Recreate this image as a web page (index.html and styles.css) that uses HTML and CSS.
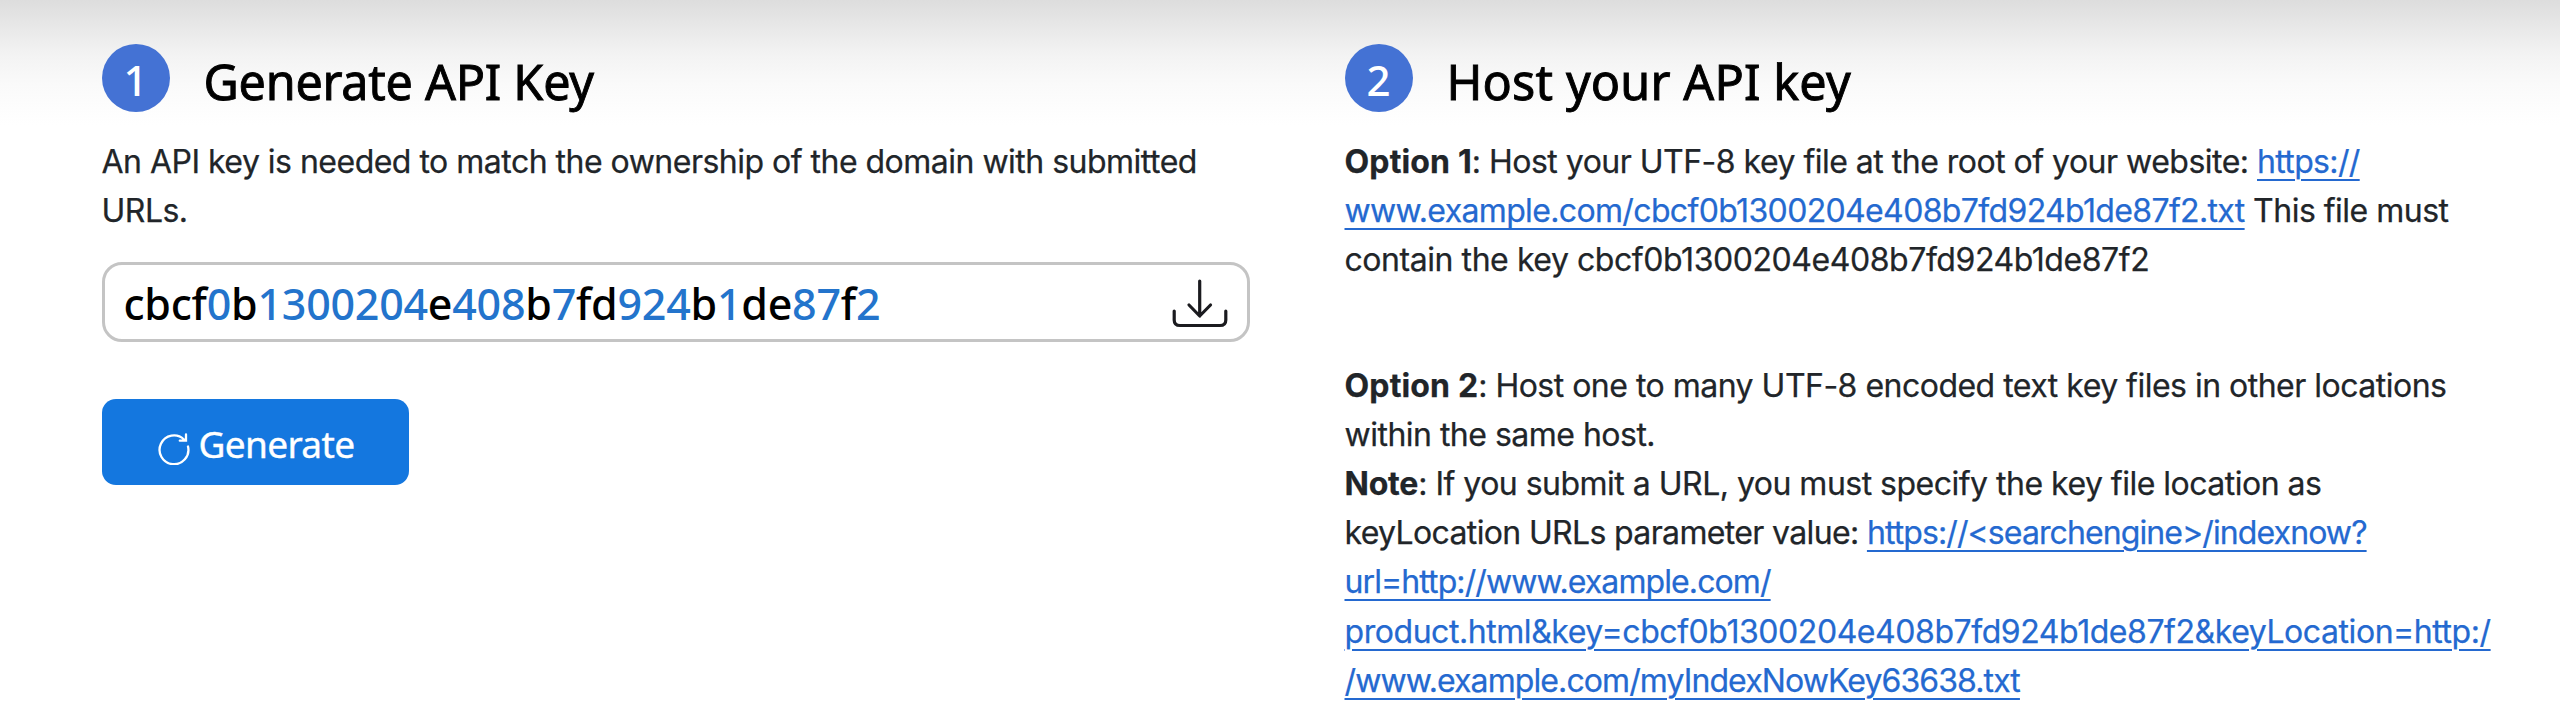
FILE: index.html
```
<!DOCTYPE html>
<html lang="en">
<head>
<meta charset="utf-8">
<title>Generate and host your API key</title>
<link rel="stylesheet" href="styles.css">
</head>
<body>
<main class="steps">
  <section class="step">
    <header class="step-header">
      <span class="badge">1</span>
      <h2 class="title title-generate">Generate API Key</h2>
    </header>
    <p class="copy">An API key is needed to match the ownership of the domain with submitted<br>URLs.</p>
    <div class="key-box">
      <span class="key">cbcf<i>0</i>b<i>1300204</i>e<i>408</i>b<i>7</i>fd<i>924</i>b<i>1</i>de<i>87</i>f<i>2</i></span>
      <svg class="download" viewBox="0 0 56 50" fill="none" stroke="#1b1b1f" stroke-width="3.200" stroke-linecap="round" stroke-linejoin="round">
        <path d="M27.700 3V37.500M17 27L27.700 38L38.500 27M2.200 33V42Q2.200 47.500 8 47.500H48Q53.800 47.500 53.800 42V33"/>
      </svg>
    </div>
    <button class="generate">
      <svg class="refresh" viewBox="0 0 32 34" fill="none" stroke="#fff" stroke-width="2.300" stroke-linecap="round">
        <path d="M30 15.500A14.400 14.400 0 1 1 26 8.500M28 3.500V9.700H21.800"/>
      </svg>
      <span class="generate-label">Generate</span>
    </button>
  </section>
  <section class="step">
    <header class="step-header">
      <span class="badge">2</span>
      <h2 class="title title-host">Host your API key</h2>
    </header>
    <p class="copy"><b>Option 1</b>: Host your UTF-8 key file at the root of your website: <a class="mid">https://</a><br><a class="mid">www.example.com/cbcf0b1300204e408b7fd924b1de87f2.txt</a> This file must<br><span class="loose">contain the key cbcf0b1300204e408b7fd924b1de87f2</span></p>
    <p class="copy option"><b>Option 2</b>: Host one to many UTF-8 encoded text key files in other locations<br>within the same host.<br><b class="note">Note</b>: If you submit a URL, you must specify the key file location as<br><span class="mid">keyLocation URLs parameter value: </span><a class="snug">https://&lt;searchengine&gt;/indexnow?</a><br><a class="snug">url=http://www.example.com/</a><br><a class="loose">product.html&amp;key=cbcf0b1300204e408b7fd924b1de87f2&amp;keyLocation=http:/</a><br><a class="snug">/www.example.com/myIndexNowKey63638.txt</a></p>
  </section>
</main>
</body>
</html>
```
FILE: styles.css
```
* { box-sizing: border-box; }

body {
  margin: 0;
  height: 725px;
  overflow: hidden;
  background: #fff linear-gradient(#dddddd 0, #e7e7e7 25px, #f3f3f3 55px, #fafafa 85px, #ffffff 125px) no-repeat;
  font-family: Inter, "Liberation Sans", sans-serif;
  color: #212529;
}

.steps {
  display: grid;
  grid-template-columns: 1148px 1fr;
  column-gap: 95px;
  padding: 44px 40px 0 101.500px;
}

.step-header {
  display: flex;
  align-items: flex-start;
  gap: 34px;
  height: 93px;
}

.badge {
  width: 68px;
  height: 68px;
  border-radius: 50%;
  background: #4472d4;
  color: #fff;
  font: 500 42px/71px "Noto Sans", sans-serif;
  text-align: center;
}

.title {
  margin: 0;
  color: #000;
  font: 400 48.500px/74px "Noto Sans", sans-serif;
  -webkit-text-stroke: 0.900px #000;
  white-space: nowrap;
}

.title-generate { letter-spacing: -0.250px; }
.title-host { letter-spacing: 0.150px; }

.copy {
  margin: 0;
  font-size: 32px;
  line-height: 49.200px;
  letter-spacing: -0.510px;
  white-space: nowrap;
  -webkit-text-stroke: 0.250px;
}

.copy b { font-weight: 700; letter-spacing: 0.150px; }
.copy .note { letter-spacing: -0.200px; }
.copy a {
  color: #2469d0;
  text-decoration: underline;
  text-decoration-thickness: 2px;
  text-underline-offset: 6px;
}
.copy .snug { letter-spacing: -0.900px; }
.copy .mid { letter-spacing: -0.645px; }
.copy .loose { letter-spacing: -0.440px; }

.option { margin-top: 76px; }

.key-box {
  display: flex;
  align-items: center;
  justify-content: space-between;
  height: 80px;
  margin-top: 26.600px;
  padding: 0 19px 0 19px;
  border: 3px solid #c4c4c4;
  border-radius: 20px;
  background: #fff;
}

.key {
  padding-top: 4px;
  color: #000;
  font: 500 43px/70px "Noto Sans", sans-serif;
  letter-spacing: -0.260px;
}
.key i { font-style: normal; color: #2374cc; }

.download { width: 56px; height: 50px; margin-top: 2px; }

.generate {
  display: flex;
  align-items: center;
  gap: 9px;
  width: 307px;
  height: 86px;
  margin-top: 57px;
  padding: 0 0 0 56px;
  border: 0;
  border-radius: 14px;
  background: #1477df;
  color: #fff;
}

.refresh { width: 32px; height: 34px; margin-top: 11px; }
.generate-label {
  padding-top: 4px;
  font: 400 37px/80px "Noto Sans", sans-serif;
  letter-spacing: -0.650px;
  -webkit-text-stroke: 0.400px #fff;
}
```
